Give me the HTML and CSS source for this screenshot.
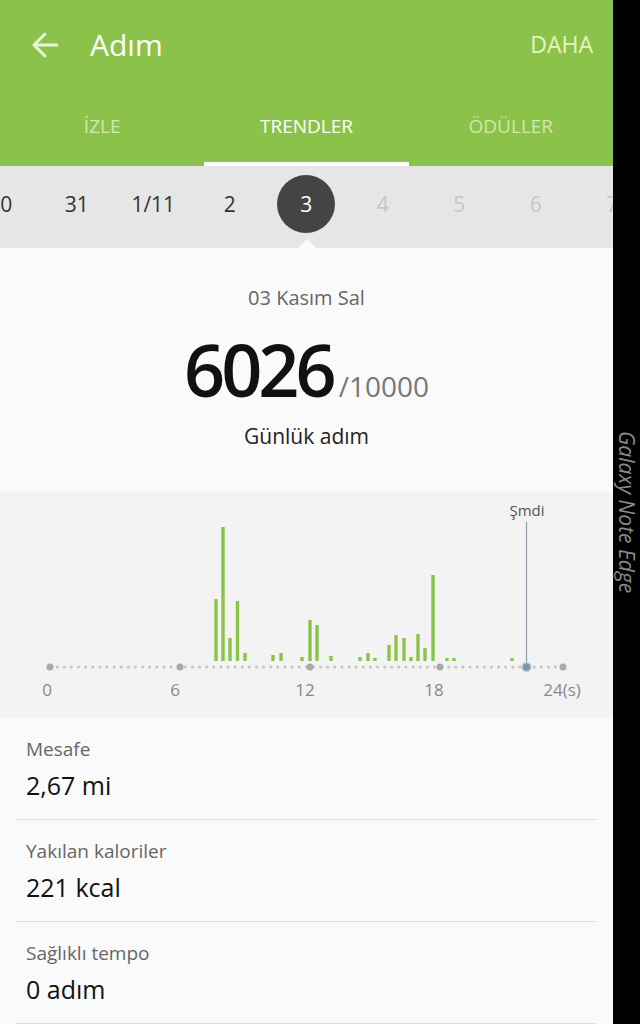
FILE: index.html
```html
<html>
  <head>
    <link rel="stylesheet" href="styles.css">
  </head>
  <body>
    <div class="screen">
      <div class="app">
        <div class="header">
          <div class="appbar">
            <svg class="back" width="30" height="30" viewBox="0 0 30 30">
              <path d="M27 15 H4 M15 4 L4 15 L15 26" fill="none" stroke="#e9f5d6" stroke-width="3" stroke-linecap="round" stroke-linejoin="round"/>
            </svg>
            <div class="title">Adım</div>
            <div class="more">DAHA</div>
          </div>
          <div class="tabs">
            <div class="tab">İZLE</div>
            <div class="tab active">TRENDLER</div>
            <div class="tab">ÖDÜLLER</div>
          </div>
        </div>

        <div class="days">
          <div class="day">30</div>
          <div class="day">31</div>
          <div class="day">1/11</div>
          <div class="day">2</div>
          <div class="day"><span class="current">3</span></div>
          <div class="day future">4</div>
          <div class="day future">5</div>
          <div class="day future">6</div>
          <div class="day future">7</div>
        </div>

        <div class="summary">
          <div class="date">03 Kasım Sal</div>
          <div class="count">6026<span class="goal">/10000</span></div>
          <div class="caption">Günlük adım</div>
        </div>

        <div class="chart">
          <svg width="613" height="226" viewBox="0 0 613 226">
            <g fill="#8bc34a">
              <rect x="214.3" y="107" width="3.4" height="62"/>
              <rect x="221.3" y="35" width="3.4" height="134"/>
              <rect x="228.3" y="146" width="3.4" height="23"/>
              <rect x="235.8" y="109" width="3.4" height="60"/>
              <rect x="243.3" y="161" width="3.4" height="8"/>
              <rect x="271.3" y="163" width="3.4" height="6"/>
              <rect x="279.3" y="161" width="3.4" height="8"/>
              <rect x="300.3" y="165" width="3.4" height="4"/>
              <rect x="308.3" y="128" width="3.4" height="41"/>
              <rect x="315.3" y="133" width="3.4" height="36"/>
              <rect x="329.3" y="164" width="3.4" height="5"/>
              <rect x="358.3" y="165" width="3.4" height="4"/>
              <rect x="366.3" y="161" width="3.4" height="8"/>
              <rect x="373.3" y="166" width="3.4" height="3"/>
              <rect x="387.3" y="153" width="3.4" height="16"/>
              <rect x="394.3" y="143" width="3.4" height="26"/>
              <rect x="402.3" y="146" width="3.4" height="23"/>
              <rect x="409.3" y="165" width="3.4" height="4"/>
              <rect x="416.3" y="142" width="3.4" height="27"/>
              <rect x="423.3" y="156" width="3.4" height="13"/>
              <rect x="431.3" y="83" width="3.4" height="86"/>
              <rect x="445.3" y="166" width="3.4" height="3"/>
              <rect x="452.3" y="166" width="3.4" height="3"/>
              <rect x="510.3" y="166" width="3.4" height="3"/>
            </g>
            <line x1="50" y1="175" x2="563" y2="175" stroke="#c4c4c4" stroke-width="3" stroke-linecap="round" stroke-dasharray="0 7.12"/>
            <g fill="#a9a9a9">
              <circle cx="50" cy="175" r="3.5"/>
              <circle cx="180" cy="175" r="3.5"/>
              <circle cx="310" cy="175" r="3.5"/>
              <circle cx="440" cy="175" r="3.5"/>
              <circle cx="563" cy="175" r="3.5"/>
            </g>
            <line x1="526.5" y1="30" x2="526.5" y2="175" stroke="#8c9aa9" stroke-width="1.2"/>
            <circle cx="526.5" cy="175" r="4.5" fill="#8195aa" stroke="#c9d2dc" stroke-width="1.5"/>
            <text class="now" x="527" y="24" text-anchor="middle">Şmdi</text>
            <g class="axis" text-anchor="middle">
              <text x="47" y="204">0</text>
              <text x="175" y="204">6</text>
              <text x="305" y="204">12</text>
              <text x="434" y="204">18</text>
              <text x="562" y="204">24(s)</text>
            </g>
          </svg>
        </div>

        <div class="stats">
          <div class="stat">
            <div class="label">Mesafe</div>
            <div class="value">2,67 mi</div>
          </div>
          <div class="stat">
            <div class="label">Yakılan kaloriler</div>
            <div class="value">221 kcal</div>
          </div>
          <div class="stat">
            <div class="label">Sağlıklı tempo</div>
            <div class="value">0 adım</div>
          </div>
        </div>
      </div>

      <div class="edge">
        <div class="edge-text">Galaxy Note Edge</div>
      </div>
    </div>
  </body>
</html>
```

FILE: styles.css
```css
body {
  margin: 0;
  font-family: "Open Sans", "Noto Sans", sans-serif;
  background-color: #000;
}
.screen {
  display: flex;
  width: 640px;
  height: 1024px;
  overflow: hidden;
}
.app {
  width: 613px;
  flex-shrink: 0;
  background-color: #fafafa;
  overflow: hidden;
}
.header {
  background-color: #8bc34a;
}
.appbar {
  height: 88px;
  display: flex;
  align-items: center;
  padding: 0 20px 0 30px;
  box-sizing: border-box;
}
.back {
  margin-right: 30px;
  margin-top: 2px;
}
.title {
  color: white;
  font-size: 30px;
  flex: 1;
}
.more {
  color: #e6f3c0;
  font-size: 23px;
}
.tabs {
  display: flex;
  height: 78px;
}
.tab {
  flex: 1;
  display: flex;
  align-items: center;
  justify-content: center;
  font-size: 19px;
  color: #cfe8ad;
  border-bottom: 4px solid transparent;
  padding-top: 2px;
}
.tab.active {
  color: white;
  border-bottom-color: white;
}
.days {
  position: relative;
  height: 82px;
  box-sizing: border-box;
  padding-bottom: 6px;
  background-color: #e6e6e6;
  display: flex;
  align-items: center;
  margin-left: -38px;
}
.days::after {
  content: "";
  position: absolute;
  left: 336px;
  bottom: 0;
  border-left: 9px solid transparent;
  border-right: 9px solid transparent;
  border-bottom: 9px solid #fafafa;
}
.day {
  width: 76.5px;
  flex-shrink: 0;
  display: flex;
  justify-content: center;
  align-items: center;
  font-size: 21px;
  color: #333;
}
.day.future {
  color: #c6c6c6;
}
.current {
  display: flex;
  align-items: center;
  justify-content: center;
  width: 58px;
  height: 58px;
  border-radius: 50%;
  background-color: #444;
  color: white;
}
.summary {
  text-align: center;
  padding: 36px 0 41px;
}
.date {
  font-size: 20px;
  line-height: 28px;
  color: #666;
}
.count {
  margin-top: 17px;
  font-size: 72px;
  line-height: 80px;
  color: #111;
  font-weight: 600;
  letter-spacing: -4px;
}
.goal {
  font-size: 28px;
  line-height: 1;
  font-weight: 400;
  color: #777;
  letter-spacing: 0;
  margin-left: 6px;
}
.caption {
  margin-top: 12px;
  font-size: 21px;
  line-height: 30px;
  color: #222;
}
.chart {
  background-color: #f3f3f3;
  height: 226px;
}
.chart svg {
  display: block;
}
.now {
  font-size: 15px;
  fill: #555;
}
.axis {
  font-size: 17px;
  fill: #888;
}
.stats {
  padding: 0 17px 0 16px;
}
.stat {
  padding: 18px 10px 16px;
  border-bottom: 1px solid #dedede;
}
.label {
  font-size: 19px;
  line-height: 26px;
  color: #666;
}
.value {
  margin-top: 5px;
  font-size: 25px;
  line-height: 36px;
  color: #111;
}
.edge {
  flex: 1;
  background-color: #000;
  display: flex;
  align-items: center;
  justify-content: center;
}
.edge-text {
  writing-mode: vertical-rl;
  font-size: 21px;
  font-style: italic;
  color: #8a8a8a;
}
```
